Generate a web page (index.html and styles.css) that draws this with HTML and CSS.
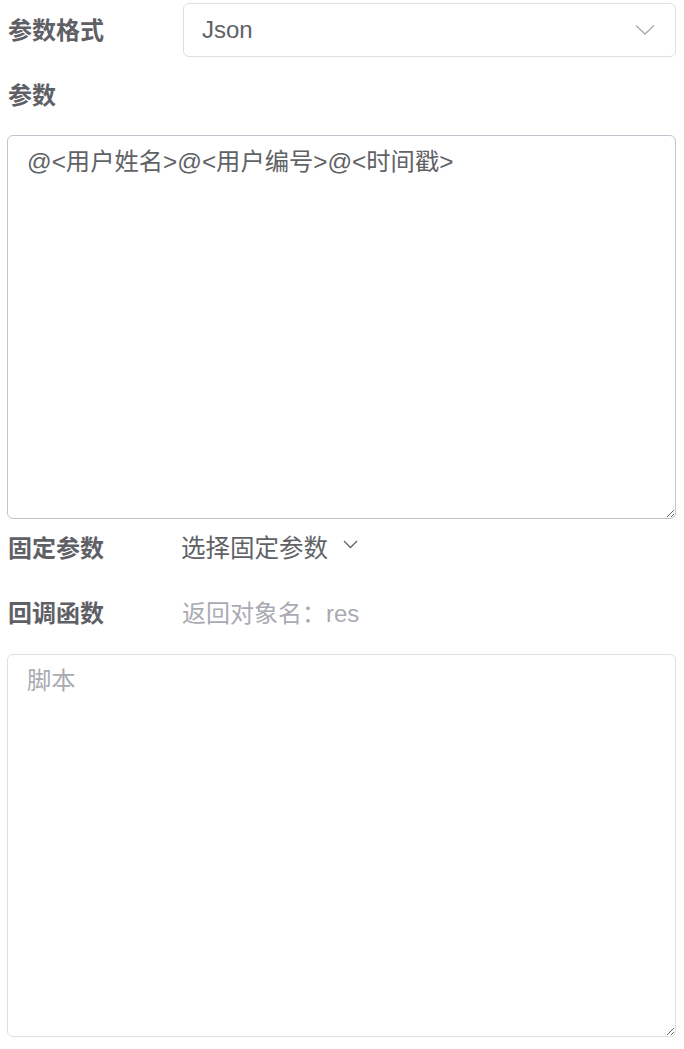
FILE: index.html
```html
<!DOCTYPE html>
<html lang="zh-CN">
<head>
    <meta charset="UTF-8">
    <meta name="viewport" content="width=device-width, initial-scale=1.0">
    <title>参数设置</title>
    <link rel="stylesheet" href="styles.css">
</head>
<body>
    <form class="form">
        <div class="row row-select">
            <label class="label">参数格式</label>
            <div class="select">
                <span class="select-value">Json</span>
                <svg class="select-arrow" width="20" height="12" viewBox="0 0 20 12">
                    <polyline points="1,1.5 10,10 19,1.5" fill="none" stroke="#a8abb2" stroke-width="1.3"/>
                </svg>
            </div>
        </div>

        <div class="row row-title">
            <label class="label">参数</label>
        </div>
        <textarea class="textarea textarea-params">@&lt;用户姓名&gt;@&lt;用户编号&gt;@&lt;时间戳&gt;</textarea>

        <div class="row row-fixed">
            <label class="label">固定参数</label>
            <div class="dropdown">
                <span>选择固定参数</span>
                <svg class="dropdown-arrow" width="15" height="10" viewBox="0 0 15 10">
                    <polyline points="1,2 7.5,8.5 14,2" fill="none" stroke="#606266" stroke-width="1.3"/>
                </svg>
            </div>
        </div>

        <div class="row row-callback">
            <label class="label">回调函数</label>
            <span class="hint">返回对象名：res</span>
        </div>
        <textarea class="textarea textarea-script" placeholder="脚本"></textarea>
    </form>
</body>
</html>
```

FILE: styles.css
```css
body {
    margin: 0;
    padding: 0;
    font-family: "Liberation Sans", "Noto Sans CJK SC", sans-serif;
    color: #606266;
    background: #fff;
}
.form {
    padding: 3px 8px 0 7px;
    display: flex;
    flex-direction: column;
}
.row {
    display: flex;
    align-items: center;
}
.label {
    width: 175px;
    padding-left: 1px;
    font-size: 24px;
    font-weight: bold;
    color: #5e6066;
}
.row-select {
    height: 54px;
}
.row-select .label {
    margin-top: -4px;
}
.select {
    flex: 1;
    height: 54px;
    box-sizing: border-box;
    border: 1px solid #dcdfe6;
    border-radius: 6px;
    display: flex;
    align-items: center;
    justify-content: space-between;
    padding: 0 20px 0 18px;
}
.select-value {
    font-size: 24px;
}
.row-title {
    height: 54px;
    margin-top: 9px;
}
.textarea {
    display: block;
    width: 100%;
    box-sizing: border-box;
    height: 384px;
    border: 1px solid #c0c4cc;
    border-radius: 6px;
    padding: 8px 19px;
    font-family: inherit;
    font-size: 24.3px;
    line-height: 36px;
    color: #606266;
    resize: vertical;
    outline: none;
}
.textarea::placeholder {
    color: #a8abb2;
}
.textarea-params {
    margin-top: 15px;
}
.row-fixed {
    height: 36px;
    margin-top: 9px;
}
.dropdown {
    display: flex;
    align-items: center;
    gap: 15px;
    font-size: 24.5px;
    margin-left: -2px;
}
.dropdown-arrow {
    margin-top: -4px;
}
.row-callback {
    height: 36px;
    margin-top: 29px;
}
.hint {
    font-size: 24px;
    color: #a8abb2;
    margin-left: -1px;
}
.textarea-script {
    margin-top: 25px;
    height: 383px;
    border-color: #dcdfe6;
}
```
